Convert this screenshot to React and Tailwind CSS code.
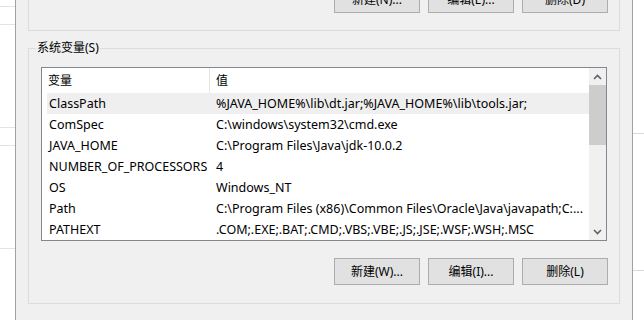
import React from "react";

const font = { fontFamily: '"Noto Sans", "Noto Sans CJK SC", sans-serif' };

const rows = [
  ["ClassPath", "%JAVA_HOME%\\lib\\dt.jar;%JAVA_HOME%\\lib\\tools.jar;", true],
  ["ComSpec", "C:\\windows\\system32\\cmd.exe"],
  ["JAVA_HOME", "C:\\Program Files\\Java\\jdk-10.0.2"],
  ["NUMBER_OF_PROCESSORS", "4"],
  ["OS", "Windows_NT"],
  ["Path", "C:\\Program Files (x86)\\Common Files\\Oracle\\Java\\javapath;C:..."],
  ["PATHEXT", ".COM;.EXE;.BAT;.CMD;.VBS;.VBE;.JS;.JSE;.WSF;.WSH;.MSC"],
];

function Btn({ children }) {
  return (
    <div className="w-[86px] h-[27px] flex items-center justify-center border border-[#adadad] bg-[#e1e1e1] text-[12px] text-black">
      {children}
    </div>
  );
}

function Chevron({ down }) {
  return (
    <svg width="9" height="6" viewBox="0 0 9 6">
      <path
        d={down ? "M1 1 L4.5 4.5 L8 1" : "M1 5 L4.5 1.5 L8 5"}
        fill="none"
        stroke="#606060"
        strokeWidth="1.6"
      />
    </svg>
  );
}

export default function App() {
  return (
    <div className="w-[644px] h-[320px] flex bg-white overflow-hidden text-black" style={font}>
      {/* background window, left */}
      <div className="w-[15px] shrink-0 flex flex-col">
        <div className="h-[7px] border-b border-[#e3e3e3]" />
        <div className="h-[18px] border-b border-[#e3e3e3]" />
        <div className="h-[103px] border-b border-[#e3e3e3]" />
        <div className="h-[18px] border-b border-[#e3e3e3]" />
        <div className="h-[103px] border-b border-[#e3e3e3]" />
      </div>

      {/* dialog */}
      <div className="w-[618px] shrink-0 border-x border-[#a0a0a0] bg-[#f0f0f0] flex flex-col">
        {/* user variables group (cut off) */}
        <div className="mt-[-20px] ml-[12px] w-[592px] h-[51px] border border-[#dcdcdc] pt-[5px] pr-[11px] flex justify-end gap-[8px] shrink-0">
          <Btn>新建(N)...</Btn>
          <Btn>编辑(E)...</Btn>
          <Btn>删除(D)</Btn>
        </div>

        {/* system variables group */}
        <div className="relative mt-[17px] ml-[12px] w-[592px] h-[256px] border border-[#dcdcdc] shrink-0 flex flex-col">
          <span className="absolute left-[7px] top-[-10px] px-[1px] bg-[#f0f0f0] text-[12px] leading-[18px]">
            系统变量(S)
          </span>

          <div className="mt-[18px] ml-[12px] w-[566px] h-[174px] border border-[#828790] bg-white flex">
            <div className="flex-1 flex flex-col min-w-0">
              <div className="h-[25px] flex text-[12px] shrink-0">
                <div className="w-[168px] border-r border-[#e5e5e5] pl-[6px] flex items-center">变量</div>
                <div className="pl-[6px] flex items-center">值</div>
              </div>
              {rows.map(([k, v, sel]) => (
                <div key={k} className="h-[21px] pl-[5px] shrink-0">
                  <div className={`h-full pt-[1px] flex items-center text-[12.5px] whitespace-nowrap ${sel ? "bg-[#efefef]" : ""}`}>
                    <div className="w-[163px] pl-[2px] shrink-0">{k}</div>
                    <div className="pl-[6px]">{v}</div>
                  </div>
                </div>
              ))}
            </div>
            <div className="w-[17px] shrink-0 bg-[#f0f0f0] flex flex-col">
              <div className="h-[17px] flex items-center justify-center">
                <Chevron />
              </div>
              <div className="h-[60px] bg-[#cdcdcd]" />
              <div className="flex-1" />
              <div className="h-[17px] flex items-center justify-center">
                <Chevron down />
              </div>
            </div>
          </div>

          <div className="mt-[17px] pr-[11px] flex justify-end gap-[8px]">
            <Btn>新建(W)...</Btn>
            <Btn>编辑(I)...</Btn>
            <Btn>删除(L)</Btn>
          </div>
        </div>
      </div>

      {/* background window, right */}
      <div className="flex-1 flex flex-col">
        <div className="h-[134px] border-b border-[#d9d9d9]" />
        <div className="h-[137px] border-b border-[#d9d9d9]" />
      </div>
    </div>
  );
}
